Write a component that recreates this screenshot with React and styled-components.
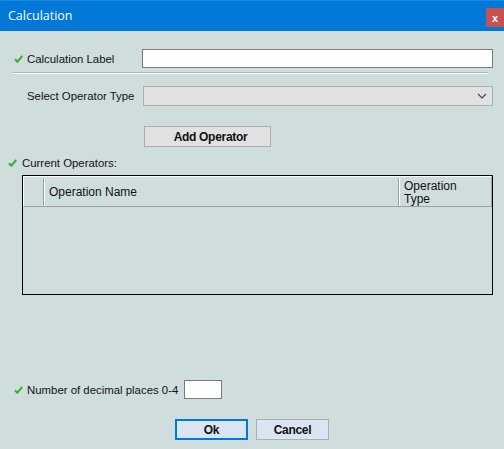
import React from 'react'
import styled, { createGlobalStyle } from 'styled-components'

const GlobalStyle = createGlobalStyle`
  html, body {
    margin: 0;
    padding: 0;
    background: #cfdddd;
  }
  * { box-sizing: border-box; }
`

const Dialog = styled.div`
  width: 504px;
  height: 449px;
  background: #cfdddd;
  font-family: "Liberation Sans", Arial, sans-serif;
  font-size: 11.4px;
  line-height: 14px;
  color: #111;
  overflow: hidden;
`
const TitleBar = styled.div`
  height: 31px;
  background: #0078d7;
  border-top: 1px solid #1a86dc;
  display: flex;
  justify-content: space-between;
  align-items: flex-start;
`
const Title = styled.div`
  color: #fff;
  font-family: "Open Sans", "Liberation Sans", sans-serif;
  font-size: 12.5px;
  line-height: 17px;
  padding: 6px 0 0 8px;
`
const Close = styled.div`
  width: 18px;
  height: 19px;
  margin-top: 7px;
  background: #c75050;
  color: #fff;
  font-weight: bold;
  font-size: 11px;
  display: flex;
  align-items: center;
  justify-content: center;
`
const Body = styled.div`
  display: flex;
  flex-direction: column;
`
const Row = styled.div`
  display: flex;
  align-items: center;
  height: ${p => p.h || 14}px;
  margin-top: ${p => p.top}px;
  padding-left: ${p => p.left}px;
`
const Check = styled.svg`
  width: 9px;
  height: 8px;
  margin-right: ${p => p.gap}px;
  flex-shrink: 0;
`
const Label = styled.span`
  width: ${p => p.width ? p.width + 'px' : 'auto'};
  white-space: nowrap;
`
const TextInput = styled.div`
  width: ${p => p.width}px;
  height: 19px;
  background: #fff;
  border: 1px solid #7a7a7a;
`
const Separator = styled.div`
  margin: 4px 0 0 13px;
  width: 475px;
  height: 2px;
  border-top: 1px solid #aab6b6;
  border-bottom: 1px solid #ffffff;
`
const Select = styled.div`
  width: 350px;
  height: 20px;
  background: #e1e1e1;
  border: 1px solid #adadad;
  display: flex;
  align-items: center;
  justify-content: flex-end;
  padding-right: 5px;
`
const Button = styled.div`
  width: ${p => p.width}px;
  height: 21px;
  background: ${p => p.bg || '#e1e1e1'};
  border: ${p => p.primary ? '2px solid #0078d7' : '1px solid #adadad'};
  font-weight: bold;
  font-size: 12px;
  display: flex;
  align-items: center;
  justify-content: center;
  letter-spacing: -0.3px;
`
const AddButton = styled(Button)`
  margin: 20px 0 0 144px;
  padding-left: 6px;
`
const Table = styled.div`
  margin: 5px 0 0 22px;
  width: 471px;
  height: 120px;
  border: 1px solid #000;
  display: flex;
  flex-direction: column;
`
const Header = styled.div`
  height: 31px;
  display: grid;
  grid-template-columns: 20px 355px 1fr;
  border-top: 1px solid #fff;
  border-left: 1px solid #fff;
  border-right: 1px solid #a0a0a0;
  border-bottom: 1px solid #a0a0a0;
  font-size: 12px;
`
const HeadCell = styled.div`
  border-right: ${p => p.last ? 'none' : '1px solid #a0a0a0'};
  box-shadow: ${p => p.last ? 'none' : '1px 0 0 #fff'};
  padding: ${p => p.wrap ? '2px 0 0 5px' : '0 0 0 5px'};
  display: flex;
  align-items: ${p => p.wrap ? 'flex-start' : 'center'};
  line-height: 13px;
  margin: 1px 0;
`
const Footer = styled.div`
  display: flex;
  gap: 8px;
  margin: 20px 0 0 175px;
`

const CheckMark = ({ gap }) => (
  <Check viewBox="0 0 9 8" gap={gap}>
    <path d="M1 4.3 L3.3 6.8 L8.2 1" fill="none" stroke="#2fb52f" strokeWidth="2" />
  </Check>
)

const App = () => {
  return (
    <Dialog>
      <GlobalStyle />
      <TitleBar>
        <Title>Calculation</Title>
        <Close>x</Close>
      </TitleBar>
      <Body>
        <Row top={18} left={14} h={19}>
          <CheckMark gap={4} />
          <Label width={115}>Calculation Label</Label>
          <TextInput width={351} />
        </Row>
        <Separator />
        <Row top={12} left={27} h={20}>
          <Label width={116}>Select Operator Type</Label>
          <Select>
            <svg width="10" height="6" viewBox="0 0 10 6">
              <path d="M1 1 L5 5 L9 1" fill="none" stroke="#444" strokeWidth="1.2" />
            </svg>
          </Select>
        </Row>
        <AddButton width={127}>Add Operator</AddButton>
        <Row top={9} left={8}>
          <CheckMark gap={5} />
          <Label>Current Operators:</Label>
        </Row>
        <Table>
          <Header>
            <HeadCell />
            <HeadCell>Operation Name</HeadCell>
            <HeadCell last wrap>Operation<br />Type</HeadCell>
          </Header>
        </Table>
        <Row top={85} left={14} h={19}>
          <CheckMark gap={4} />
          <Label width={157}>Number of decimal places 0-4</Label>
          <TextInput width={38} />
        </Row>
        <Footer>
          <Button primary width={73} bg="#d9e5f3">Ok</Button>
          <Button width={73} bg="#d9e5f3">Cancel</Button>
        </Footer>
      </Body>
    </Dialog>
  )
}

export default App
